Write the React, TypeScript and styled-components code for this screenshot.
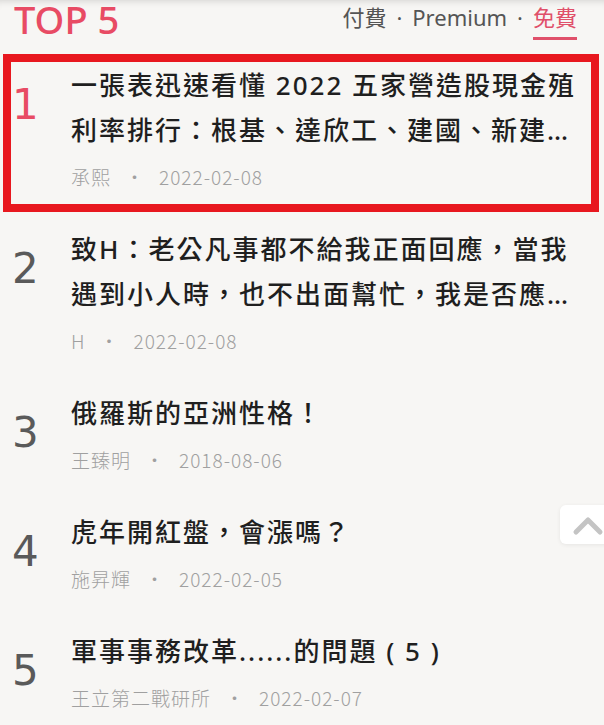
import React from 'react';
import styled, { createGlobalStyle } from 'styled-components';

const GlobalStyle = createGlobalStyle`
    html,
    body {
        margin: 0;
        padding: 0;
        overflow: hidden;
        background: #f7f6f4;
    }

    body {
        font-family: 'Noto Sans', 'Noto Sans CJK TC', sans-serif;
    }
`;

const Page = styled.div`
    min-height: 100vh;
    background: #f7f6f4;
`;

const Header = styled.header`
    display: flex;
    justify-content: space-between;
    align-items: flex-start;
    height: 54px;
    padding: 0 27px 0 14px;
    box-shadow: inset 0 8px 8px -8px rgba(0, 0, 0, 0.18);
    box-sizing: border-box;
`;

const Heading = styled.h1`
    margin: 0;
    font-family: 'Noto Sans', sans-serif;
    font-size: 38px;
    line-height: 38px;
    font-weight: 500;
    color: #e84b64;
`;

const Tabs = styled.nav`
    display: flex;
    align-items: flex-start;
    padding-top: 2px;
    font-family: 'Noto Sans', 'Noto Sans CJK TC', sans-serif;
    font-size: 22px;
    line-height: 30px;
    color: #555;
`;

const Tab = styled.span<{ $active?: boolean }>`
    padding-bottom: 5px;
    border-bottom: 3px solid
        ${({ $active }) => ($active ? '#e0506a' : 'transparent')};
    color: ${({ $active }) => ($active ? '#e0506a' : '#555')};
`;

const TabDot = styled.span`
    margin: 0 10px;
`;

const List = styled.ol`
    list-style: none;
    margin: 0;
    padding: 0 5px 0 3px;
    display: flex;
    flex-direction: column;
    gap: 6px;
`;

const Item = styled.li<{ $highlighted?: boolean }>`
    display: flex;
    align-items: flex-start;
    padding: 1px 8px 12px 0;
    border: 8px solid
        ${({ $highlighted }) => ($highlighted ? '#e8181f' : 'transparent')};
`;

const Rank = styled.div<{ $top?: boolean }>`
    flex: 0 0 59px;
    margin-top: 21px;
    padding-left: 1px;
    font-family: 'DejaVu Sans', sans-serif;
    font-size: 42px;
    line-height: 42px;
    color: ${({ $top }) => ($top ? '#e84b64' : '#5a5a5a')};
`;

const Body = styled.div`
    flex: 1;
    min-width: 0;
`;

const Title = styled.a`
    display: -webkit-box;
    -webkit-box-orient: vertical;
    -webkit-line-clamp: 2;
    overflow: hidden;
    font-family: 'Noto Sans', 'Noto Sans CJK TC', sans-serif;
    font-size: 26px;
    line-height: 45px;
    letter-spacing: 2px;
    font-weight: 500;
    color: #1f1f1f;
    text-decoration: none;
`;

const Meta = styled.div`
    display: flex;
    margin-top: 9px;
    font-family: 'Noto Sans CJK TC', 'Noto Sans', sans-serif;
    font-size: 19px;
    line-height: 30px;
    letter-spacing: 1px;
    font-weight: 300;
    color: #a0a0a0;
`;

const MetaDot = styled.span`
    margin: 0 14px;
`;

const ScrollTop = styled.button`
    position: fixed;
    top: 505px;
    right: -16px;
    width: 60px;
    height: 39px;
    padding: 0;
    border: none;
    border-radius: 6px;
    background: #fff;
    box-shadow: 0 1px 4px rgba(0, 0, 0, 0.07);
    cursor: pointer;
`;

const articles = [
    {
        title: '一張表迅速看懂 2022 五家營造股現金殖利率排行：根基、達欣工、建國、新建、工信',
        author: '承熙',
        date: '2022-02-08',
    },
    {
        title: '致H：老公凡事都不給我正面回應，當我遇到小人時，也不出面幫忙，我是否應該離婚？',
        author: 'H',
        date: '2022-02-08',
    },
    {
        title: '俄羅斯的亞洲性格！',
        author: '王臻明',
        date: '2018-08-06',
    },
    {
        title: '虎年開紅盤，會漲嗎？',
        author: '施昇輝',
        date: '2022-02-05',
    },
    {
        title: '軍事事務改革......的問題 ( 5 )',
        author: '王立第二戰研所',
        date: '2022-02-07',
    },
];

const App = (): React.ReactElement => (
    <Page>
        <GlobalStyle />

        <Header>
            <Heading>TOP 5</Heading>

            <Tabs>
                <Tab>付費</Tab>
                <TabDot>·</TabDot>
                <Tab>Premium</Tab>
                <TabDot>·</TabDot>
                <Tab $active>免費</Tab>
            </Tabs>
        </Header>

        <List>
            {articles.map((article, index) => (
                <Item key={index} $highlighted={index === 0}>
                    <Rank $top={index === 0}>{index + 1}</Rank>

                    <Body>
                        <Title href="#">{article.title}</Title>

                        <Meta>
                            <span>{article.author}</span>
                            <MetaDot>·</MetaDot>
                            <span>{article.date}</span>
                        </Meta>
                    </Body>
                </Item>
            ))}
        </List>

        <ScrollTop aria-label="回到頂端">
            <svg width="60" height="39" viewBox="0 0 60 39">
                <polyline
                    points="16,27 28,15 40,27"
                    fill="none"
                    stroke="#c4c4c4"
                    strokeWidth="5"
                    strokeLinecap="round"
                    strokeLinejoin="round"
                />
            </svg>
        </ScrollTop>
    </Page>
);

export default App;
